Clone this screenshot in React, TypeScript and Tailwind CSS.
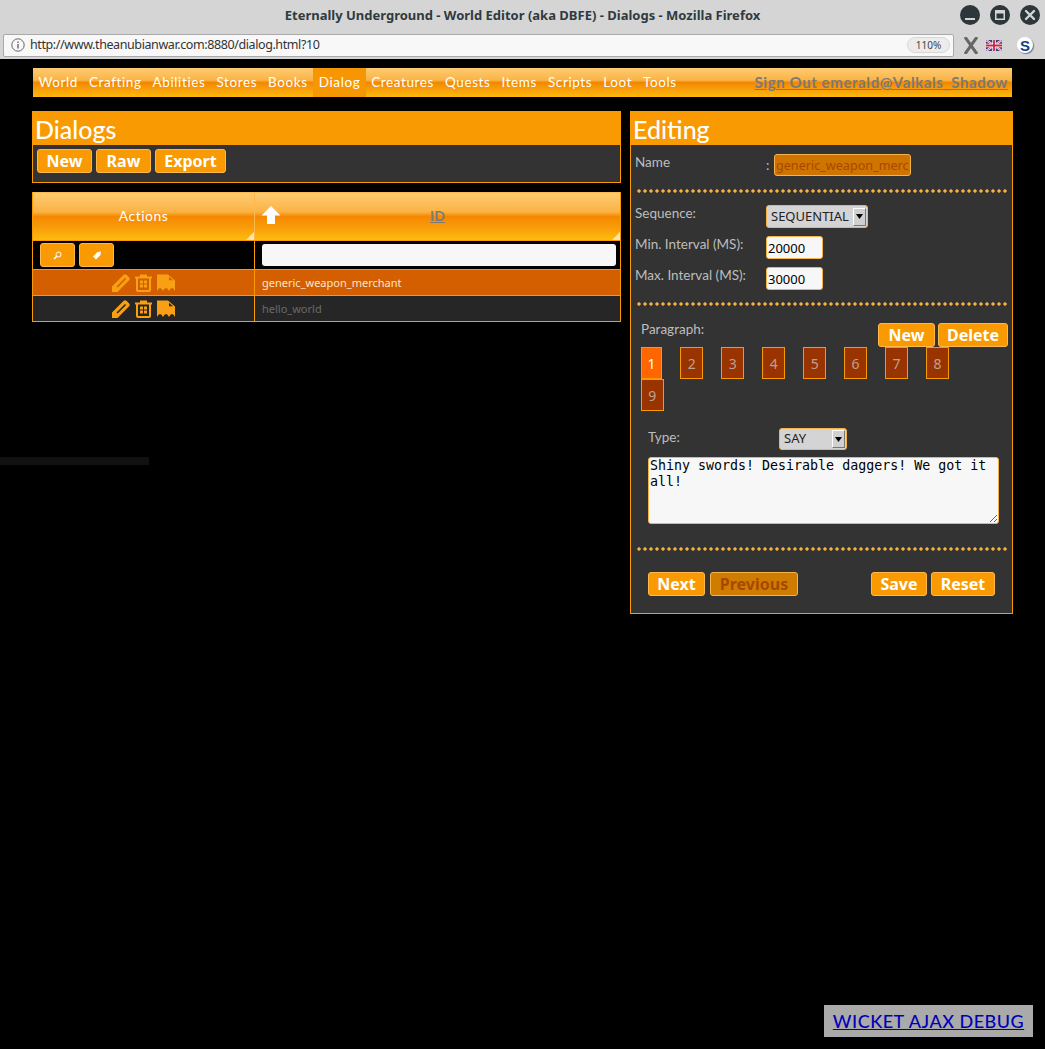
const humanist = "font-['Lato','Noto_Sans',sans-serif]";
const navItems = ["World", "Crafting", "Abilities", "Stores", "Books", "Dialog", "Creatures", "Quests", "Items", "Scripts", "Loot", "Tools"];
const paragraphs = ["1", "2", "3", "4", "5", "6", "7", "8", "9"];

function OrangeButton({ label, className = "" }: { label: string; className?: string }) {
  return (
    <button className={"h-6 rounded-[3px] border border-[#fdb94e] bg-[#f99a03] font-['Noto_Sans',sans-serif] text-[16px] leading-[20px] font-bold text-white " + className}>
      {label}
    </button>
  );
}

function Divider({ className = "" }: { className?: string }) {
  return <div className={"mx-[5px] h-[4px] bg-[radial-gradient(circle,#f6b23c_1.4px,transparent_1.9px)] bg-[length:6px_4px] " + className} />;
}

function CornerMark() {
  return <span className="absolute right-0 bottom-0 h-0 w-0 border-t-[8px] border-l-[8px] border-t-transparent border-l-transparent border-r-0 border-b-[8px] border-b-[#fde3b0]" />;
}

function PencilIcon() {
  return (
    <svg width="18" height="18" viewBox="0 0 18 18" fill="none">
      <path d="M0 12.500 11.400 1.100a2.400 2.400 0 0 1 3.400 0l2.100 2.100a2.400 2.400 0 0 1 0 3.400L5.500 18H0z" fill="currentColor" />
      <path d="M4.500 12.400 13 3.900l1.100 1.100-8.500 8.500z" fill="var(--icon-bg)" />
    </svg>
  );
}

function TrashIcon() {
  return (
    <svg width="17" height="18" viewBox="0 0 17 18" fill="none">
      <path d="M0 2.500h17v2h-1V16a2 2 0 0 1-2 2H3a2 2 0 0 1-2-2V4.500H0zM5 .5h7v2H5z" fill="currentColor" />
      <rect x="3" y="4.500" width="11" height="11.500" fill="var(--icon-bg)" />
      <path d="M5 6.500h3v3H5zM9 6.500h3v3H9zM5 10.500h3v3H5zM9 10.500h3v3H9z" fill="currentColor" />
    </svg>
  );
}

function TornPageIcon() {
  return (
    <svg width="18" height="18" viewBox="0 0 18 18" fill="none">
      <path d="M0 .5h11l7 6v10.500q-1.500-3-3-3t-3 3q-1.500-3-3-3t-3 3q-1.500-3-3-3t-3 3z" fill="currentColor" />
      <path d="M12 2.800v3.400h4z" fill="var(--icon-bg)" />
    </svg>
  );
}

function ActionRow({ rowBg, cssBg, text, textColor }: { rowBg: string; cssBg: string; text: string; textColor: string }) {
  return (
    <div className={"flex h-[26px] border-t border-[#f99a03] " + rowBg} style={{ "--icon-bg": cssBg } as React.CSSProperties}>
      <div className="flex w-[222px] items-center justify-center gap-[5px] border-r border-[#f99a03] text-[#f99f13]">
        <PencilIcon />
        <TrashIcon />
        <TornPageIcon />
      </div>
      <div className={"flex-1 pl-[7px] font-['Noto_Sans',sans-serif] text-[11px] leading-[26px] " + textColor}>{text}</div>
    </div>
  );
}

function FakeSelect({ value, className }: { value: string; className: string }) {
  return (
    <div className={"flex items-center justify-between rounded-[3px] border border-[#f8b24a] bg-[#d4d4d4] pl-[4px] font-['Noto_Sans',sans-serif] text-[13px] text-[#222] " + className}>
      <span>{value}</span>
      <span className="mr-px flex h-[18px] w-[13px] items-center justify-center border border-t-white border-r-[#777] border-b-[#777] border-l-white bg-[#d0d0d0]">
        <svg width="7" height="5" viewBox="0 0 7 5">
          <path d="M0 0h7L3.500 5z" fill="#000" />
        </svg>
      </span>
    </div>
  );
}

export default function App() {
  return (
    <div className="relative h-[1049px] w-[1045px] overflow-hidden bg-black">
      {/* browser chrome */}
      <div className="bg-[#d5d5d5]">
        <div className="relative flex h-[31px] items-center justify-center font-['Noto_Sans',sans-serif] text-[13px] font-bold text-[#2f3a40]">
          <span>Eternally Underground - World Editor (aka DBFE) - Dialogs - Mozilla Firefox</span>
          <div className="absolute top-[5px] right-[5px] flex gap-[10px]">
            <svg width="20" height="20" viewBox="0 0 20 20">
              <circle cx="10" cy="10" r="10" fill="#2c363b" />
              <rect x="5" y="13" width="10" height="2" fill="#d5d5d5" />
            </svg>
            <svg width="20" height="20" viewBox="0 0 20 20">
              <circle cx="10" cy="10" r="10" fill="#2c363b" />
              <path d="M5 5h10v10H5z M6.500 8.500v5h7v-5z" fill="#d5d5d5" fillRule="evenodd" />
            </svg>
            <svg width="20" height="20" viewBox="0 0 20 20">
              <circle cx="10" cy="10" r="10" fill="#2c363b" />
              <path d="M6 6l8 8M14 6l-8 8" stroke="#d5d5d5" strokeWidth="2.400" strokeLinecap="round" />
            </svg>
          </div>
        </div>
        <div className="flex h-[28px] items-center pl-[3px]">
          <div className="flex h-[23px] w-[951px] items-center rounded-[2px] border border-[#a9a9a9] bg-[#f8f8f8] pl-[7px]">
            <svg width="14" height="14" viewBox="0 0 14 14" fill="none">
              <circle cx="7" cy="7" r="6.200" stroke="#666" />
              <path d="M7 6v4.500M7 3.500v1.400" stroke="#666" strokeWidth="1.400" />
            </svg>
            <span className="ml-[5px] font-['Noto_Sans',sans-serif] text-[12.5px] tracking-[-0.4px] text-[#333]">http://www.theanubianwar.com:8880/dialog.html?10</span>
            <span className="mr-[3px] ml-auto flex h-[16px] w-[43px] items-center justify-center rounded-full border border-[#d8d8d8] bg-[#ececec] font-['Noto_Sans',sans-serif] text-[10px] text-[#444]">
              110%
            </span>
          </div>
          <svg className="ml-[10px]" width="14" height="17" viewBox="0 0 14 17">
            <path d="M1 0l12 17M13 0 1 17" stroke="#666" strokeWidth="3" />
          </svg>
          <svg className="ml-[8px]" width="16" height="11" viewBox="0 0 16 11">
            <rect width="16" height="11" fill="#39418c" />
            <path d="M0 0l16 11M16 0 0 11" stroke="#fff" strokeWidth="2" />
            <path d="M0 0l16 11M16 0 0 11" stroke="#c8283c" strokeWidth="0.700" />
            <path d="M8 0v11M0 5.500h16" stroke="#fff" strokeWidth="3.400" />
            <path d="M8 0v11M0 5.500h16" stroke="#c8283c" strokeWidth="1.800" />
          </svg>
          <span className="ml-[15px] flex h-[16px] w-[16px] items-center justify-center rounded-full bg-white font-['Liberation_Sans',sans-serif] text-[15px] leading-none font-bold text-[#14408e] shadow-[1px_1px_1px_#777]">
            S
          </span>
        </div>
      </div>

      {/* site nav */}
      <nav className={"mt-[9px] ml-[33px] flex h-[29px] w-[979px] items-center bg-[linear-gradient(#fecb72,#fbb345_42%,#f18800_50%,#f99d0b_72%,#fdb90c)] text-[13.5px] tracking-[0.6px] text-white " + humanist}>
        {navItems.map((item) => (
          <span
            key={item}
            className={"flex h-full items-center px-[5.5px] pb-[1px] " + (item === "Dialog" ? "bg-[#f79603]" : "")}
          >
            {item}
          </span>
        ))}
        <a className="mr-[4px] ml-auto pb-[1px] text-[15px] font-bold tracking-[0.6px] text-[#7a7a7a] underline">Sign Out emerald@Valkals_Shadow</a>
      </nav>

      <main className="mt-[14px] ml-[32px] flex items-start gap-[9px]">
        {/* list column */}
        <div className="w-[589px]">
          <section className="border border-[#f99a03] bg-[#333]">
            <h2 className={"h-[33px] bg-[#f99a03] pl-[2px] text-[25px] leading-[34px] font-medium text-white " + humanist}>Dialogs</h2>
            <div className="flex h-[37px] gap-[4px] pt-[4px] pl-[4px]">
              <OrangeButton label="New" className="w-[55px]" />
              <OrangeButton label="Raw" className="w-[55px]" />
              <OrangeButton label="Export" className="w-[71px]" />
            </div>
          </section>

          <section className="mt-[9px] border border-t-0 border-[#f99a03] bg-black">
            <div className="flex h-[49px] border-t border-b border-t-[#fdb94e] border-b-[#f99a03] bg-[linear-gradient(#fecb72,#fbb345_40%,#f58800_50%,#f99d0b_75%,#fdbc0c)]">
              <div className={"relative flex w-[222px] items-center justify-center border-r border-[#fdb94e] pb-[2px] text-[14px] tracking-[0.5px] text-white " + humanist}>
                Actions
                <CornerMark />
              </div>
              <div className={"relative flex flex-1 items-center justify-center pb-[2px] text-[14px] font-bold text-[#7a7a7a] underline " + humanist}>
                <svg className="absolute top-[13px] left-[6px]" width="20" height="18" viewBox="0 0 20 18">
                  <path d="M10 0 19.500 9.500H14V18H6V9.500H.5z" fill="#fff" />
                </svg>
                ID
                <CornerMark />
              </div>
            </div>
            <div className="flex h-[28px]">
              <div className="flex w-[222px] items-center gap-[4px] border-r border-[#f99a03] pl-[7px]">
                <button className="flex h-6 w-[35px] items-center justify-center rounded-[3px] border border-[#fdb94e] bg-[#f99a03]">
                  <svg width="9" height="9" viewBox="0 0 9 9" fill="none">
                    <circle cx="5.500" cy="3.500" r="2.400" stroke="#fde6c0" strokeWidth="1.200" />
                    <path d="M3.800 5.200 1 8" stroke="#fff" strokeWidth="1.500" />
                  </svg>
                </button>
                <button className="flex h-6 w-[35px] items-center justify-center rounded-[3px] border border-[#fdb94e] bg-[#f99a03]">
                  <svg width="10" height="9" viewBox="0 0 10 9">
                    <path d="M5.500 1 9 .5 8.500 4 4 8.500 1 5.500z" fill="#fff" />
                  </svg>
                </button>
              </div>
              <div className="flex flex-1 items-center pl-[7px]">
                <input className="h-[22px] w-[354px] rounded-[3px] bg-[#f7f7f7]" />
              </div>
            </div>
            <ActionRow rowBg="bg-[#d35f00]" cssBg="#d35f00" text="generic_weapon_merchant" textColor="text-[#fde5cc]" />
            <ActionRow rowBg="bg-[#262626]" cssBg="#262626" text="hello_world" textColor="text-[#6a6a6a]" />
          </section>
        </div>

        {/* editing column */}
        <section className="h-[503px] w-[383px] border border-[#f99a03] bg-[#333]">
          <h2 className={"h-[33px] bg-[#f99a03] pl-[2px] text-[25px] leading-[34px] font-medium text-white " + humanist}>Editing</h2>
          <div className={"text-[13.5px] text-[#bdbdbd] " + humanist}>
            <div className="flex h-[44px] pt-[9px] pl-[4px]">
              <span className="w-[131px] leading-[16px]">Name</span>
              <span className="mt-[2px] w-[8px] leading-[18px]">:</span>
              <input
                readOnly
                value="generic_weapon_merchant"
                className="h-[22px] w-[137px] rounded-[3px] border border-[#f8b24a] bg-[#cf7400] px-px font-['Noto_Sans',sans-serif] text-[12.6px] text-[#a84800]"
              />
            </div>
            <Divider />
            <div className="mt-[12px] flex h-[23px] pl-[4px]">
              <span className="w-[131px] leading-[16px]">Sequence:</span>
              <FakeSelect value="SEQUENTIAL" className="h-[23px] w-[102px]" />
            </div>
            <div className="mt-[8px] flex h-[23px] pl-[4px]">
              <span className="w-[131px] leading-[16px]">Min. Interval (MS):</span>
              <input readOnly value="20000" className="h-[23px] w-[57px] rounded-[3px] border border-[#f8b24a] bg-[#f7f7f7] px-px font-['Noto_Sans',sans-serif] text-[13px] text-black" />
            </div>
            <div className="mt-[8px] flex h-[23px] pl-[4px]">
              <span className="w-[131px] leading-[16px]">Max. Interval (MS):</span>
              <input readOnly value="30000" className="h-[23px] w-[57px] rounded-[3px] border border-[#f8b24a] bg-[#f7f7f7] px-px font-['Noto_Sans',sans-serif] text-[13px] text-black" />
            </div>
            <Divider className="mt-[12px]" />

            <div className="flex h-[21px] items-start justify-between pt-[14px] pr-[4px] pl-[10px]">
              <span className="leading-[18px]">Paragraph:</span>
              <div className="mt-[3px] flex gap-[3px]">
                <OrangeButton label="New" className="w-[57px]" />
                <OrangeButton label="Delete" className="w-[70px]" />
              </div>
            </div>
            <div className="mt-[20px] flex w-[340px] flex-wrap gap-x-[18.4px] pl-[10px]">
              {paragraphs.map((p) => (
                <span
                  key={p}
                  className={
                    "flex h-[32px] items-center justify-center border border-[#f99a03] font-['Noto_Sans',sans-serif] text-[14px] " +
                    (p === "1" ? "w-[21px] bg-[#ff6600] text-white" : "w-[22.6px] bg-[#993300] text-[#bfa090]")
                  }
                >
                  {p}
                </span>
              ))}
            </div>

            <div className="mt-[17px] flex h-[26px] pl-[17px]">
              <span className="w-[131px] leading-[18px]">Type:</span>
              <FakeSelect value="SAY" className="h-[22px] w-[68px]" />
            </div>
            <div className="mt-[3px] pl-[17px]">
              <textarea
                readOnly
                value="Shiny swords! Desirable daggers! We got it all!"
                className="block h-[67px] w-[351px] rounded-[3px] border border-[#f8b24a] bg-[#f7f7f7] px-px font-['DejaVu_Sans_Mono',monospace] text-[13.3px] leading-[16px] text-black"
              />
            </div>
            <Divider className="mt-[23px]" />
            <div className="mt-[21px] flex justify-between pr-[17px] pl-[17px]">
              <div className="flex gap-[5px]">
                <OrangeButton label="Next" className="w-[57px]" />
                <button className="h-6 w-[88px] rounded-[3px] border border-[#f8b24a] bg-[#cf7d00] font-['Noto_Sans',sans-serif] text-[16px] leading-[20px] font-bold text-[#a84800]">
                  Previous
                </button>
              </div>
              <div className="flex gap-[4px]">
                <OrangeButton label="Save" className="w-[56px]" />
                <OrangeButton label="Reset" className="w-[64px]" />
              </div>
            </div>
          </div>
        </section>
      </main>

      {/* stray strip and debug link sit over the page */}
      <div className="absolute top-[457px] left-0 h-[8px] w-[149px] bg-[#111]" />
      <a className={"absolute top-[1005px] left-[824px] flex h-[32px] w-[209px] items-center justify-center bg-[#aaaaaa] text-[18px] font-medium tracking-[0.5px] text-[#0000b8] underline " + humanist}>
        WICKET AJAX DEBUG
      </a>
    </div>
  );
}
